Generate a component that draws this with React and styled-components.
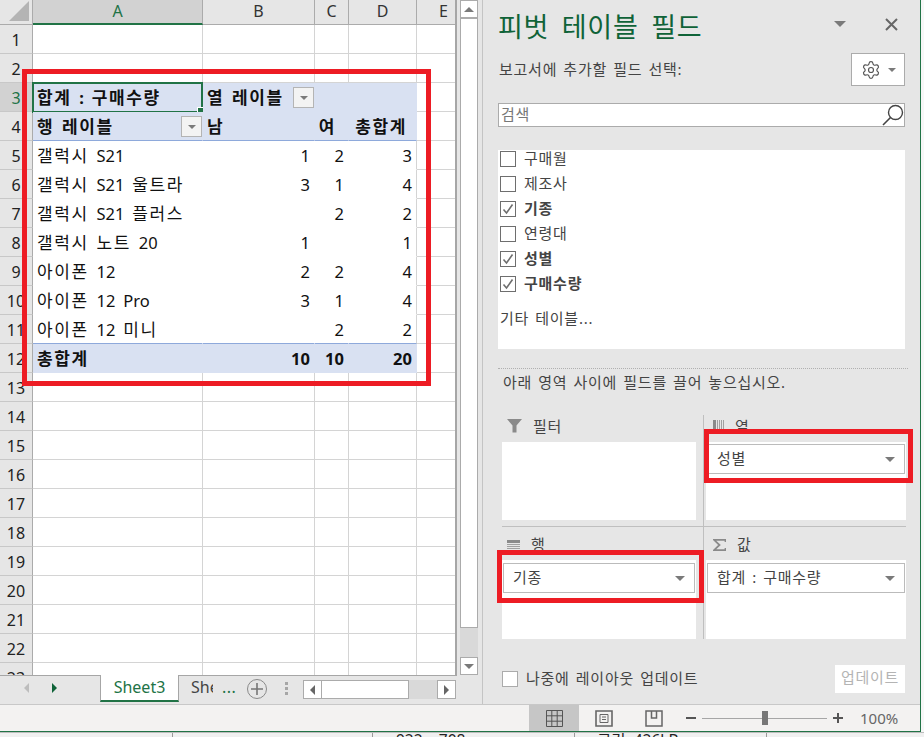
import React from "react";
import styled, { createGlobalStyle } from "styled-components";
import { Settings } from "lucide-react";

const FONT = `"Noto Sans", "Noto Sans CJK KR", sans-serif`;
const GREEN = "#217346";
const LINE = "#d4d4d4";
const PANEL = "#e6e6e6";
const BLUE = "#d9e1f2";
const RED = "#ed1c24";

const Global = createGlobalStyle`
  html, body { margin: 0; padding: 0; width: 924px; height: 737px; overflow: hidden; background: #f7f7f7; }
  body { font-family: ${FONT}; }
  * { box-sizing: border-box; }
`;

const Page = styled.div`
  position: relative;
  width: 924px;
  height: 737px;
  overflow: hidden;
`;
const Window = styled.div`
  width: 921px;
  height: 732px;
  display: flex;
  flex-direction: column;
  border-right: 1px solid ${GREEN};
  border-bottom: 1px solid ${GREEN};
`;
const Main = styled.div`
  display: flex;
  height: 704px;
`;
const SheetArea = styled.div`
  width: 483px;
  display: flex;
  flex-direction: column;
  background: ${PANEL};
  border-right: 1px solid #c4c4c4;
`;
const GridRow = styled.div`
  display: flex;
  height: 675px;
`;
const Grid = styled.div`
  width: 457px;
  height: 676px;
  overflow: hidden;
  display: grid;
  grid-template-columns: 33px 170px 112px 34px 68px 54px;
  grid-auto-rows: 29px;
  grid-template-rows: 25px;
  border-right: 2px solid #a6a6a6;
  border-bottom: 1px solid #a6a6a6;
  background: #fff;
`;
const Corner = styled.div`
  background: ${PANEL};
  border-right: 1px solid #ababab;
  border-bottom: 1px solid #ababab;
  display: flex;
  align-items: flex-end;
  justify-content: flex-end;
  padding: 3px;
`;
const CornerMark = styled.div`
  width: 0;
  height: 0;
  border-left: 20px solid transparent;
  border-bottom: 20px solid #b4b4b4;
`;
const ColHead = styled.div`
  background: ${p => (p.$on ? "#d2d2d2" : PANEL)};
  color: ${p => (p.$on ? GREEN : "#333")};
  border-right: 1px solid #ababab;
  border-bottom: ${p => (p.$on ? `2px solid ${GREEN}` : "1px solid #ababab")};
  font-size: 16px;
  line-height: 22px;
  text-align: center;
`;
const RowHead = styled.div`
  background: ${p => (p.$on ? "#d2d2d2" : PANEL)};
  color: ${p => (p.$on ? GREEN : "#222")};
  border-right: 1px solid #ababab;
  border-bottom: 1px solid #c8c8c8;
  font-size: 16px;
  line-height: 30px;
  text-align: center;
`;
const Cell = styled.div`
  position: relative;
  display: flex;
  align-items: center;
  justify-content: ${p => (p.$align === "right" ? "flex-end" : p.$between ? "space-between" : "flex-start")};
  padding: 1px ${p => p.$pr ?? 4}px 0 4px;
  background: ${p => (p.$fill ? BLUE : "#fff")};
  border-right: 1px solid ${p => (p.$fill ? BLUE : p.$plain ? "#fff" : LINE)};
  border-bottom: 1px solid ${p => (p.$rule ? "#8ea9db" : p.$fill ? BLUE : p.$plain ? "#fff" : LINE)};
  font-size: 16.5px;
  line-height: 24px;
  word-spacing: 3.5px;
  font-weight: ${p => (p.$bold ? 700 : 400)};
  color: #111;
  white-space: nowrap;
`;
const EdgeCell = styled(Cell)`
  border-right-color: ${p => (p.$fill ? BLUE : LINE)};
`;
const HangulRun = styled.span`
  font-size: 17px;
  letter-spacing: 1.6px;
`;
const FilterButton = styled.div`
  width: 21px;
  height: 21px;
  margin: 0 -4px 0 0;
  background: #f3f3f3;
  border: 1px solid #b4b4b4;
  display: flex;
  align-items: center;
  justify-content: center;
`;
const Tri = styled.span`
  display: inline-block;
  width: 0;
  height: 0;
  border-left: ${p => p.$s ?? 4}px solid transparent;
  border-right: ${p => p.$s ?? 4}px solid transparent;
  border-top: ${p => p.$s ?? 4}px solid ${p => p.$c ?? "#7a7a7a"};
  flex: none;
`;
const Selection = styled.div`
  position: absolute;
  left: -1px;
  top: -1px;
  width: 171px;
  height: 31px;
  border: 2px solid ${GREEN};
  &::after {
    content: "";
    position: absolute;
    right: -4px;
    bottom: -4px;
    width: 6px;
    height: 6px;
    background: ${GREEN};
    border: 1px solid #fff;
  }
`;
const VScroll = styled.div`
  width: 25px;
  padding: 0 4px 0 3px;
  display: flex;
  flex-direction: column;
`;
const ScrollBtn = styled.div`
  height: 18px;
  flex: none;
  background: #fff;
  border: 1px solid #ababab;
  display: flex;
  align-items: center;
  justify-content: center;
`;
const ScrollThumb = styled.div`
  flex: 1;
  background: #fff;
  border: 1px solid #ababab;
`;
const ScrollTrack = styled.div`
  flex: none;
  height: 29px;
  background: #d9d9d9;
`;
const UpTri = styled(Tri)`
  border-top: none;
  border-bottom: 5px solid #7a7a7a;
  border-left-width: 5px;
  border-right-width: 5px;
`;
const SideTri = styled.span`
  width: 0;
  height: 0;
  flex: none;
  border-top: 5px solid transparent;
  border-bottom: 5px solid transparent;
  ${p => (p.$left ? "border-right" : "border-left")}: 5px solid ${p => p.$c ?? "#666"};
`;
const TabsBar = styled.div`
  height: 28px;
  display: flex;
  align-items: flex-start;
  font-size: 16px;
`;
const TabNav = styled.div`
  width: 100px;
  height: 26px;
  padding-left: 24px;
  display: flex;
  align-items: center;
  gap: 23px;
`;
const ActiveTab = styled.div`
  width: 79px;
  height: 27px;
  background: #fff;
  border-left: 1px solid #a6a6a6;
  border-right: 1px solid #a6a6a6;
  border-bottom: 2px solid ${GREEN};
  color: ${GREEN};
  text-align: center;
  line-height: 25px;
`;
const OtherTab = styled.div`
  width: 34px;
  height: 26px;
  padding-left: 12px;
  overflow: hidden;
  color: #444;
  line-height: 25px;
  white-space: nowrap;
`;
const Ellipsis = styled.div`
  width: 34px;
  padding-left: 9px;
  color: ${GREEN};
  line-height: 24px;
  letter-spacing: 0.5px;
`;
const AddSheet = styled.div`
  width: 20px;
  height: 20px;
  margin-top: 4px;
  border: 1.5px solid #8a8a8a;
  border-radius: 50%;
  display: flex;
  align-items: center;
  justify-content: center;
`;
const Dots = styled.div`
  margin: 7px 15px 0 18px;
  display: flex;
  flex-direction: column;
  gap: 2px;
  & > i {
    width: 3px;
    height: 3px;
    background: #a6a6a6;
  }
`;
const HScroll = styled.div`
  margin-top: 5px;
  width: 153px;
  height: 19px;
  display: flex;
`;
const HBtn = styled.div`
  width: 19px;
  flex: none;
  background: #fff;
  border: 1px solid #ababab;
  display: flex;
  align-items: center;
  justify-content: center;
`;
const HThumb = styled.div`
  width: 87px;
  background: #fff;
  border: 1px solid #ababab;
  border-left: none;
`;
const HTrack = styled.div`
  flex: 1;
  background: #d9d9d9;
`;

const Panel = styled.div`
  width: 437px;
  background: ${PANEL};
  padding: 0 15px;
  display: flex;
  flex-direction: column;
  color: #444;
  font-size: 15px;
  letter-spacing: 0.75px;
  word-spacing: 1.5px;
`;
const TitleRow = styled.div`
  height: 53px;
  display: flex;
  align-items: flex-start;
`;
const Title = styled.div`
  flex: 1;
  font-size: 27px;
  line-height: 36px;
  margin-top: 9px;
  color: #0f6338;
  letter-spacing: 0.7px;
  word-spacing: 5px;
  white-space: nowrap;
`;
const TitleTri = styled.div`
  display: flex;
  margin: 21px 39px 0 0;
`;
const CloseIcon = styled.svg`
  width: 13px;
  height: 13px;
  margin: 18px 7px 0 0;
  stroke: #666;
  stroke-width: 2;
`;
const SubRow = styled.div`
  height: 33px;
  display: flex;
  align-items: center;
  justify-content: space-between;
`;
const SubLabel = styled.span`
  margin: -3px 0 0 1px;
`;
const GearBox = styled.div`
  width: 54px;
  height: 33px;
  background: #fff;
  border: 1px solid #ababab;
  display: flex;
  align-items: center;
  justify-content: center;
  gap: 7px;
  color: #555;
`;
const SearchBox = styled.div`
  margin-top: 17px;
  height: 24px;
  background: #fff;
  border: 1px solid #ababab;
  display: flex;
  align-items: center;
  justify-content: space-between;
  padding: 0 0 0 2px;
  color: #777;
`;
const SearchText = styled.span`
  margin-top: -3px;
`;
const FieldList = styled.div`
  margin-top: 23px;
  height: 199px;
  background: #fff;
  overflow: hidden;
  display: flex;
  flex-direction: column;
`;
const FieldsTop = styled.div`
  height: 0;
  margin-top: -4px;
`;
const FieldRow = styled.div`
  height: 25px;
  flex: none;
  display: flex;
  align-items: center;
  gap: 8px;
  padding-left: 2px;
  font-weight: ${p => (p.$bold ? 700 : 400)};
  color: #444;
`;
const FieldLabel = styled.span`
  margin-top: -2px;
`;
const CheckBox = styled.div`
  width: 16px;
  height: 16px;
  flex: none;
  background: #fff;
  border: 1px solid ${p => p.$c ?? "#6e6e6e"};
  display: flex;
  align-items: center;
  justify-content: center;
`;
const MoreTables = styled.div`
  margin: 11px 0 0 2px;
  color: #444;
`;
const Dotted = styled.div`
  margin-top: 19px;
  height: 1px;
  border-top: 1px dotted #b0b0b0;
  margin-right: -3px;
`;
const Hint = styled.div`
  height: 20px;
  margin: 3px 0 1px 5px;
  line-height: 20px;
`;
const Areas = styled.div`
  margin: 22px 0 0 4px;
  width: 404px;
  display: grid;
  grid-template-columns: 202px 202px;
  grid-template-rows: 112px 112px;
`;
const Area = styled.div`
  display: flex;
  flex-direction: column;
  padding: ${p => (p.$right ? "0 0 0 2px" : "0 7px 0 0")};
  border-right: ${p => (p.$right ? "none" : "1px solid #bfbfbf")};
  border-bottom: ${p => (p.$bottom ? "none" : "1px solid #bfbfbf")};
  padding-bottom: ${p => (p.$bottom ? 0 : 6)}px;
`;
const AreaHead = styled.div`
  flex: none;
  height: ${p => (p.$bottom ? 33 : 27)}px;
  display: flex;
  align-items: ${p => (p.$bottom ? "flex-end" : "center")};
  gap: 11px;
  padding: ${p => (p.$right ? "0 0 6px 7px" : "0 0 6px 5px")};
  line-height: 20px;
  color: #444;
`;
const HeadIcon = styled.span`
  display: flex;
  margin-bottom: ${p => (p.$bottom ? 3 : 0)}px;
`;
const AreaBox = styled.div`
  flex: 1;
  background: #fff;
  padding: ${p => (p.$bottom ? 3 : 2)}px 1px 0;
`;
const Pill = styled.div`
  height: 30px;
  padding: 0 9px;
  background: #fff;
  border: 1px solid #bbb;
  display: flex;
  align-items: center;
  justify-content: space-between;
  color: #444;
`;
const PillText = styled.span`
  margin-top: -3px;
`;
const Footer = styled.div`
  margin-top: 26px;
  padding-left: 4px;
  height: 28px;
  display: flex;
  align-items: center;
  justify-content: space-between;
`;
const Later = styled.div`
  display: flex;
  align-items: center;
  gap: 8px;
`;
const LaterText = styled.span`
  margin-top: -3px;
`;
const UpdateButton = styled.div`
  width: 70px;
  height: 28px;
  background: #fff;
  color: #b4b4b4;
  text-align: center;
  line-height: 25px;
`;
const Status = styled.div`
  height: 27px;
  flex: none;
  background: #f3f2f1;
  border-top: 1px solid #c8c8c8;
  display: flex;
  align-items: stretch;
  padding-left: 529px;
  color: #555;
`;
const ViewBtn = styled.div`
  width: 50px;
  display: flex;
  align-items: center;
  justify-content: center;
  background: ${p => (p.$on ? "#c6c6c6" : "transparent")};
`;
const ZoomBar = styled.div`
  margin-left: 7px;
  display: flex;
  align-items: center;
`;
const ZoomMark = styled.div`
  width: 10px;
  height: 2px;
  background: #555;
  position: relative;
  ${p => p.$plus && `&::after { content: ""; position: absolute; left: 4px; top: -4px; width: 2px; height: 10px; background: #555; }`}
`;
const Slider = styled.div`
  width: 125px;
  height: 1px;
  margin: 0 6px;
  background: #a6a6a6;
  display: flex;
  align-items: center;
  padding-left: 60px;
`;
const SliderThumb = styled.div`
  flex: none;
  width: 6px;
  height: 14px;
  background: #777;
`;
const ZoomText = styled.div`
  margin-left: 17px;
  font-size: 15px;
  line-height: 26px;
  color: #666;
`;
const Behind = styled.div`
  height: 5px;
  width: 924px;
  background: #f0f0f0;
  overflow: hidden;
  display: flex;
  border-top: 1px solid #bdbdbd;
  font-size: 15.5px;
  line-height: 16px;
  color: #222;
`;
const BehindCell = styled.div`
  flex: none;
  width: ${p => p.$w}px;
  padding-left: ${p => p.$pl ?? 0}px;
  border-right: 1px solid #9a9a9a;
  white-space: nowrap;
  height: 24px;
  margin-top: -1px;
`;
const PivotHighlight = styled.div`
  position: absolute;
  left: 22px;
  top: 69px;
  width: 409px;
  height: 317px;
  border: 5px solid ${RED};
`;
const ColumnHighlight = styled.div`
  position: absolute;
  left: 704px;
  top: 429px;
  width: 209px;
  height: 54px;
  border: 5px solid ${RED};
`;
const RowHighlight = styled.div`
  position: absolute;
  left: 497px;
  top: 550px;
  width: 207px;
  height: 53px;
  border: 5px solid ${RED};
`;

const cols = ["A", "B", "C", "D", "E"];
const rows = [
  ["갤럭시 S21", 1, 2, 3],
  ["갤럭시 S21 울트라", 3, 1, 4],
  ["갤럭시 S21 플러스", "", 2, 2],
  ["갤럭시 노트 20", 1, "", 1],
  ["아이폰 12", 2, 2, 4],
  ["아이폰 12 Pro", 3, 1, 4],
  ["아이폰 12 미니", "", 2, 2],
];
const fields = [
  ["구매월", false],
  ["제조사", false],
  ["기종", true],
  ["연령대", false],
  ["성별", true],
  ["구매수량", true],
];

// Hangul in the original face runs wider than Latin, so Hangul runs get their own spacing.
const Label = ({ text }) => (
  <span>
    {text.split(/([가-힣]+)/).map((part, i) =>
      /[가-힣]/.test(part) ? <HangulRun key={i}>{part}</HangulRun> : part
    )}
  </span>
);

const Check = () => (
  <svg width="12" height="12" viewBox="0 0 12 12">
    <path d="M1.5 6.5 L4.5 10 L10.5 1.5" fill="none" stroke="#6e6e6e" strokeWidth="1.6" />
  </svg>
);
const FunnelIcon = () => (
  <svg width="15" height="15" viewBox="0 0 15 15">
    <path d="M0 1 H15 L9.5 7.5 V14.5 H5.5 V7.5 Z" fill="#8a8a8a" />
  </svg>
);
const ColumnsIcon = () => (
  <svg width="11" height="11" viewBox="0 0 11 11">
    <path d="M0 0h3v11H0z" fill="#8a8a8a" />
    <path d="M4 0h1v11H4zM6 0h1v11H6zM8 0h1v11H8zM10 0h1v11h-1z" fill="#a0a0a0" />
  </svg>
);
const RowsIcon = () => (
  <svg width="13" height="11" viewBox="0 0 13 11">
    <path d="M0 0h13v3H0z" fill="#8a8a8a" />
    <path d="M0 4h13v1H0zM0 6h13v1H0zM0 8h13v1H0zM0 10h13v1H0z" fill="#a0a0a0" />
  </svg>
);
const SigmaIcon = () => (
  <svg width="13" height="12" viewBox="0 0 13 12">
    <path d="M12.5 3 V0.8 H1 L6.5 6 L1 11.2 H12.5 V9" fill="none" stroke="#8a8a8a" strokeWidth="1.8" />
  </svg>
);
const SearchGlyph = () => (
  <svg width="22" height="22" viewBox="0 0 22 22">
    <circle cx="13.5" cy="8.5" r="7" fill="none" stroke="#444" strokeWidth="1.4" />
    <path d="M8.5 13.5 L1 21" stroke="#444" strokeWidth="1.6" />
  </svg>
);
const NormalIcon = () => (
  <svg width="17" height="17" viewBox="0 0 17 17">
    <path d="M.5.5h16v16H.5zM5.8.5v16M11.2.5v16M.5 5.8h16M.5 11.2h16" fill="none" stroke="#555" />
  </svg>
);
const LayoutIcon = () => (
  <svg width="18" height="17" viewBox="0 0 18 17">
    <path d="M1 1h16v15H1z" fill="none" stroke="#666" strokeWidth="1.6" />
    <path d="M5 4.5h8v8H5zM7 7h4M7 9.5h4" fill="none" stroke="#666" />
  </svg>
);
const BreakIcon = () => (
  <svg width="18" height="17" viewBox="0 0 18 17">
    <path d="M1 1h16v15H1zM6.5 1v7H11.5V1" fill="none" stroke="#666" strokeWidth="1.5" />
  </svg>
);
const PlusGlyph = () => (
  <svg width="12" height="12" viewBox="0 0 12 12">
    <path d="M6 0v12M0 6h12" stroke="#777" strokeWidth="1.6" />
  </svg>
);

function Sheet() {
  const out = [<Corner key="c"><CornerMark /></Corner>];
  cols.forEach((c, i) => out.push(<ColHead key={c} $on={i === 0}>{c}</ColHead>));
  for (let r = 1; r <= 23; r++) {
    out.push(<RowHead key={`h${r}`} $on={r === 3}>{r}</RowHead>);
    const k = i => `${r}-${i}`;
    if (r === 3) {
      out.push(
        <Cell key={k(0)} $fill $bold><Label text="합계 : 구매수량" /><Selection /></Cell>,
        <Cell key={k(1)} $fill $bold $between><Label text="열 레이블" /><FilterButton><Tri /></FilterButton></Cell>,
        <Cell key={k(2)} $fill />,
        <Cell key={k(3)} $fill />,
      );
    } else if (r === 4) {
      out.push(
        <Cell key={k(0)} $fill $bold $rule $between><Label text="행 레이블" /><FilterButton><Tri /></FilterButton></Cell>,
        <Cell key={k(1)} $fill $bold $rule><Label text="남" /></Cell>,
        <Cell key={k(2)} $fill $bold $rule $align="right" $pr={12}><Label text="여" /></Cell>,
        <Cell key={k(3)} $fill $bold $rule $align="right" $pr={9}><Label text="총합계" /></Cell>,
      );
    } else if (r >= 5 && r <= 11) {
      const d = rows[r - 5];
      const rule = r === 11;
      out.push(
        <Cell key={k(0)} $plain $rule={rule}><Label text={d[0]} /></Cell>,
        <Cell key={k(1)} $plain $rule={rule} $align="right">{d[1]}</Cell>,
        <Cell key={k(2)} $plain $rule={rule} $align="right">{d[2]}</Cell>,
        <EdgeCell key={k(3)} $plain $rule={rule} $align="right">{d[3]}</EdgeCell>,
      );
    } else if (r === 12) {
      out.push(
        <Cell key={k(0)} $fill $bold><Label text="총합계" /></Cell>,
        <Cell key={k(1)} $fill $bold $align="right">10</Cell>,
        <Cell key={k(2)} $fill $bold $align="right">10</Cell>,
        <Cell key={k(3)} $fill $bold $align="right">20</Cell>,
      );
    } else {
      [0, 1, 2, 3].forEach(i => out.push(<Cell key={k(i)} />));
    }
    out.push(<Cell key={k(4)} />);
  }
  return <Grid>{out}</Grid>;
}

export default function App() {
  return (
    <Page>
      <Global />
      <Window>
        <Main>
          <SheetArea>
            <GridRow>
              <Sheet />
              <VScroll>
                <ScrollBtn><UpTri /></ScrollBtn>
                <ScrollThumb />
                <ScrollTrack />
                <ScrollBtn><Tri $s={5} /></ScrollBtn>
              </VScroll>
            </GridRow>
            <TabsBar>
              <TabNav>
                <SideTri $left $c="#bdbdbd" />
                <SideTri $c="#0f6338" />
              </TabNav>
              <ActiveTab>Sheet3</ActiveTab>
              <OtherTab>Sheet1</OtherTab>
              <Ellipsis>...</Ellipsis>
              <AddSheet><PlusGlyph /></AddSheet>
              <Dots><i /><i /><i /></Dots>
              <HScroll>
                <HBtn><SideTri $left /></HBtn>
                <HThumb />
                <HTrack />
                <HBtn><SideTri /></HBtn>
              </HScroll>
            </TabsBar>
          </SheetArea>
          <Panel>
            <TitleRow>
              <Title>피벗 테이블 필드</Title>
              <TitleTri><Tri $s={6} /></TitleTri>
              <CloseIcon viewBox="0 0 13 13"><path d="M1 1 L12 12 M12 1 L1 12" /></CloseIcon>
            </TitleRow>
            <SubRow>
              <SubLabel>보고서에 추가할 필드 선택:</SubLabel>
              <GearBox><Settings size={20} strokeWidth={1.4} /><Tri $s={4} /></GearBox>
            </SubRow>
            <SearchBox><SearchText>검색</SearchText><SearchGlyph /></SearchBox>
            <FieldList>
              <FieldsTop />
              {fields.map(([name, on]) => (
                <FieldRow key={name} $bold={on}>
                  <CheckBox>{on && <Check />}</CheckBox>
                  <FieldLabel>{name}</FieldLabel>
                </FieldRow>
              ))}
              <MoreTables>기타 테이블...</MoreTables>
            </FieldList>
            <Dotted />
            <Hint>아래 영역 사이에 필드를 끌어 놓으십시오.</Hint>
            <Areas>
              <Area>
                <AreaHead><FunnelIcon />필터</AreaHead>
                <AreaBox />
              </Area>
              <Area $right>
                <AreaHead $right><ColumnsIcon />열</AreaHead>
                <AreaBox><Pill><PillText>성별</PillText><Tri $s={5} /></Pill></AreaBox>
              </Area>
              <Area $bottom>
                <AreaHead $bottom><HeadIcon $bottom><RowsIcon /></HeadIcon>행</AreaHead>
                <AreaBox $bottom><Pill><PillText>기종</PillText><Tri $s={5} /></Pill></AreaBox>
              </Area>
              <Area $bottom $right>
                <AreaHead $bottom $right><HeadIcon $bottom><SigmaIcon /></HeadIcon>값</AreaHead>
                <AreaBox $bottom><Pill><PillText>합계 : 구매수량</PillText><Tri $s={5} /></Pill></AreaBox>
              </Area>
            </Areas>
            <Footer>
              <Later><CheckBox $c="#ababab" /><LaterText>나중에 레이아웃 업데이트</LaterText></Later>
              <UpdateButton>업데이트</UpdateButton>
            </Footer>
          </Panel>
        </Main>
        <Status>
          <ViewBtn $on><NormalIcon /></ViewBtn>
          <ViewBtn><LayoutIcon /></ViewBtn>
          <ViewBtn><BreakIcon /></ViewBtn>
          <ZoomBar>
            <ZoomMark />
            <Slider><SliderThumb /></Slider>
            <ZoomMark $plus />
            <ZoomText>100%</ZoomText>
          </ZoomBar>
        </Status>
      </Window>
      <Behind>
        <BehindCell $w={173} />
        <BehindCell $w={200} />
        <BehindCell $w={202} $pl={23}>922 x 708px</BehindCell>
        <BehindCell $w={192} $pl={22}>크기: 426kB</BehindCell>
      </Behind>
      <PivotHighlight />
      <ColumnHighlight />
      <RowHighlight />
    </Page>
  );
}
